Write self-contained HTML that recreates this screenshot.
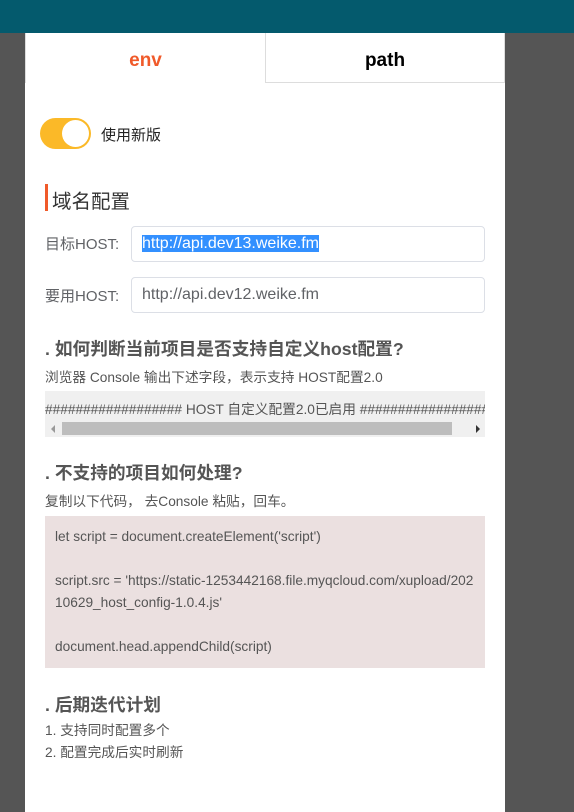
<!DOCTYPE html>
<html><head><meta charset="utf-8"><style>
*{margin:0;padding:0;box-sizing:border-box}
body{width:574px;height:812px;background:#555;font-family:"Liberation Sans","Noto Sans CJK SC",sans-serif;position:relative;overflow:hidden;color:#606266}
.top{position:absolute;left:0;top:0;width:574px;height:33px;background:#045a6d}
.panel{position:absolute;left:25px;top:33px;width:480px;height:779px;background:#fff}
.a{position:absolute;white-space:nowrap}
.tab{position:absolute;top:0;height:50px;line-height:56px;text-align:center;font-weight:bold;font-size:19px}
.in{position:absolute;left:106px;width:354px;height:36px;border:1px solid #dcdfe6;border-radius:4px;font-size:16px;line-height:34px;padding-left:10px;color:#606266}
.h{font-weight:bold;font-size:17.7px;color:#555}
.d{font-size:13.7px;color:#555}
</style></head><body>
<div class="top"></div>
<div class="panel">
 <div class="tab" style="left:0;width:240px;color:#f05a2a;border-left:1px solid #ddd">env</div>
 <div class="tab" style="left:240px;width:240px;color:#000;border:1px solid #ddd;border-top:none;height:50px">path</div>
 <div class="a" style="left:15px;top:85px;width:51px;height:31px;border-radius:16px;background:#fbb928"></div>
 <div class="a" style="left:37px;top:87px;width:27px;height:27px;border-radius:50%;background:#fff"></div>
 <div class="a" style="left:76px;top:91px;font-size:15px;color:#222">使用新版</div>
 <div class="a" style="left:20px;top:151px;width:3px;height:27px;background:#f05a2a"></div>
 <div class="a" style="left:27px;top:152px;font-size:19.5px;color:#333">域名配置</div>
 <div class="a" style="left:20px;top:200px;font-size:15px">目标HOST:</div>
 <div class="in" style="top:193px"><span style="background:#3390ff;color:#fff">http://api.dev13.weike.fm</span></div>
 <div class="a" style="left:20px;top:252px;font-size:15px">要用HOST:</div>
 <div class="in" style="top:244px">http://api.dev12.weike.fm</div>
 <div class="a h" style="left:20px;top:302px">. 如何判断当前项目是否支持自定义host配置?</div>
 <div class="a d" style="left:20px;top:333px">浏览器 Console 输出下述字段，表示支持 HOST配置2.0</div>
 <div class="a" style="left:20px;top:358px;width:440px;height:46px;background:#f0f0f0;overflow:hidden">
  <div class="a d" style="left:0;top:7px">################## HOST 自定义配置2.0已启用 ##################</div>
  <div class="a" style="left:17px;top:31px;width:390px;height:13px;background:#bdbdbd"></div>
  <div class="a" style="left:6px;top:34px;width:0;height:0;border:4px solid transparent;border-right-color:#999;border-left:none"></div>
  <div class="a" style="left:431px;top:34px;width:0;height:0;border:4px solid transparent;border-left-color:#333;border-right:none"></div>
 </div>
 <div class="a h" style="left:20px;top:426px">. 不支持的项目如何处理?</div>
 <div class="a d" style="left:20px;top:457px">复制以下代码， 去Console 粘贴，回车。</div>
 <div class="a d" style="left:20px;top:483px;width:440px;height:152px;background:#ebe0e0;padding:10px;line-height:22px;white-space:normal;word-break:break-all">let script = document.createElement('script')<br><br>script.src = 'https://static-1253442168.file.myqcloud.com/xupload/20210629_host_config-1.0.4.js'<br><br>document.head.appendChild(script)</div>
 <div class="a h" style="left:20px;top:658px">. 后期迭代计划</div>
 <div class="a d" style="left:20px;top:687px;line-height:22px">1. 支持同时配置多个<br>2. 配置完成后实时刷新</div>
</div>
</body></html>
